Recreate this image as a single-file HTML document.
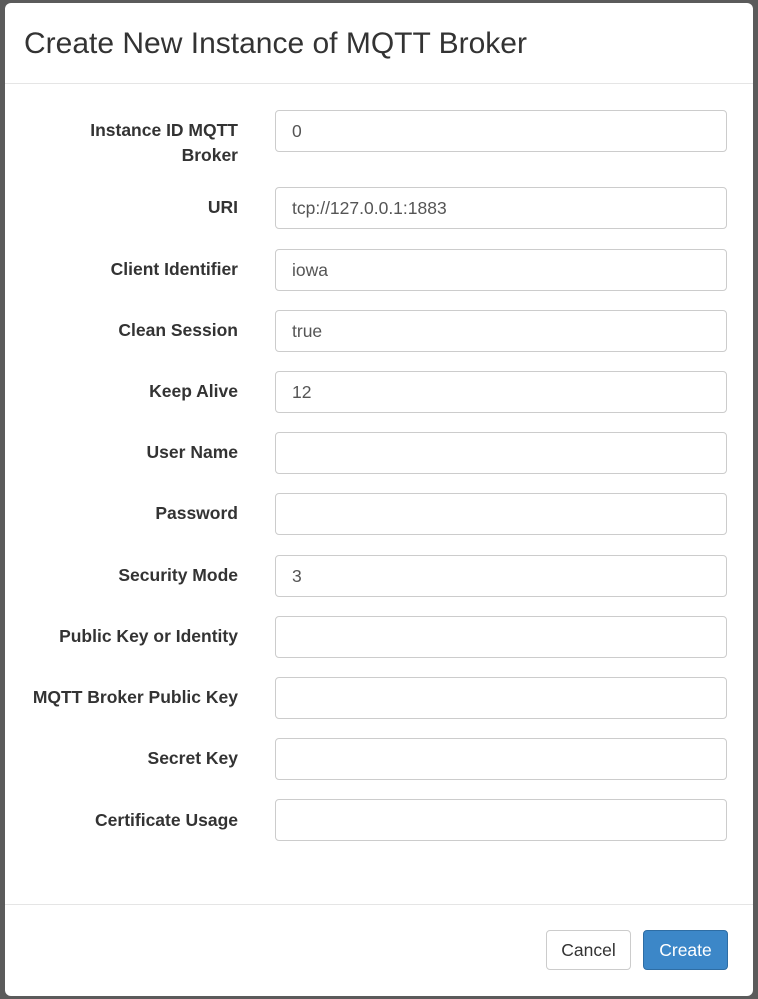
<!DOCTYPE html>
<html><head><style>
body{margin:0;width:758px;height:999px;background:#5b5b5b;font-family:"Liberation Sans",Arial,sans-serif;position:relative;overflow:hidden}
.m{position:absolute;left:5px;top:3px;width:748px;height:993px;background:#fff;border-radius:6px}
h1{position:absolute;left:19px;top:24px;margin:0;font-weight:normal;font-size:30px;color:#333}
.hr{position:absolute;left:0;right:0;height:1px;background:#e5e5e5}
.l{position:absolute;right:515px;width:240px;text-align:right;font-weight:bold;font-size:17.5px;color:#333;line-height:25px}
.i{position:absolute;left:270px;height:40px;border:1px solid #ccc;border-radius:4px;font-size:17.5px;color:#555;line-height:40px;padding-left:16px;box-sizing:content-box;width:434px}
.b{position:absolute;top:927px;height:38px;border-radius:4px;font-size:17.5px;line-height:38px;text-align:center}
</style></head><body>
<div class="m">
<h1>Create New Instance of MQTT Broker</h1>
<div class="hr" style="top:80px"></div>
<div class="l" style="top:115px">Instance ID MQTT<br>Broker</div><div class="i" style="top:107px">0</div>
<div class="l" style="top:192px">URI</div><div class="i" style="top:184px">tcp://127.0.0.1:1883</div>
<div class="l" style="top:254px">Client Identifier</div><div class="i" style="top:246px">iowa</div>
<div class="l" style="top:315px">Clean Session</div><div class="i" style="top:307px">true</div>
<div class="l" style="top:376px">Keep Alive</div><div class="i" style="top:368px">12</div>
<div class="l" style="top:437px">User Name</div><div class="i" style="top:429px"></div>
<div class="l" style="top:498px">Password</div><div class="i" style="top:490px"></div>
<div class="l" style="top:560px">Security Mode</div><div class="i" style="top:552px">3</div>
<div class="l" style="top:621px">Public Key or Identity</div><div class="i" style="top:613px"></div>
<div class="l" style="top:682px">MQTT Broker Public Key</div><div class="i" style="top:674px"></div>
<div class="l" style="top:743px">Secret Key</div><div class="i" style="top:735px"></div>
<div class="l" style="top:805px">Certificate Usage</div><div class="i" style="top:796px"></div>
<div class="hr" style="top:901px"></div>
<div class="b" style="left:541px;width:83px;border:1px solid #ccc;color:#333">Cancel</div>
<div class="b" style="left:638px;width:83px;border:1px solid #2e6da4;background:#3c87c8;color:#fff">Create</div>
</div>
</body></html>
